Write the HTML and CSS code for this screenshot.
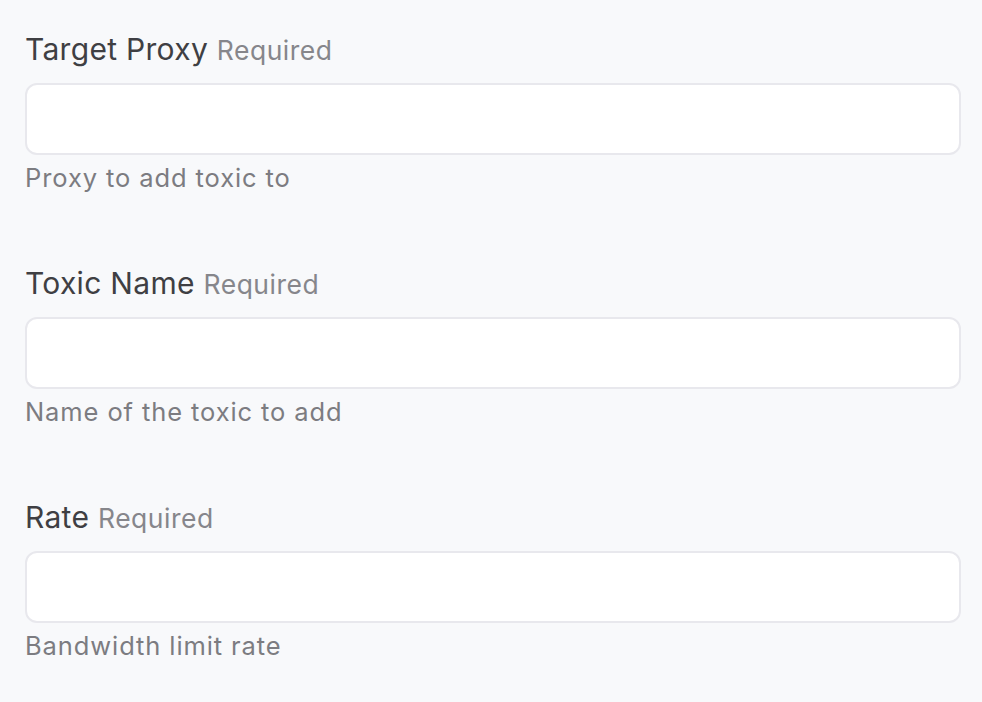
FILE: index.html
```html
<!DOCTYPE html>
<html>
<head>
<meta charset="utf-8">
<link rel="stylesheet" href="styles.css">
</head>
<body>
<form class="form">
  <div class="field">
    <label class="label">Target Proxy <span class="req">Required</span></label>
    <input class="input" type="text">
    <div class="help">Proxy to add toxic to</div>
  </div>
  <div class="field">
    <label class="label">Toxic Name <span class="req">Required</span></label>
    <input class="input" type="text">
    <div class="help">Name of the toxic to add</div>
  </div>
  <div class="field">
    <label class="label">Rate <span class="req">Required</span></label>
    <input class="input" type="text">
    <div class="help">Bandwidth limit rate</div>
  </div>
</form>
</body>
</html>
```
FILE: styles.css
```css
html, body {
  margin: 0;
  padding: 0;
  background: #f8f9fb;
}
body {
  font-family: Inter, "Noto Sans", sans-serif;
}
.form {
  display: flex;
  flex-direction: column;
  gap: 71px;
  padding: 31px 21px 0 25px;
}
.field {
  display: flex;
  flex-direction: column;
}
.label {
  font-size: 30px;
  line-height: 36px;
  letter-spacing: 0.3px;
  color: #3f3f43;
  margin-bottom: 15px;
}
.req {
  font-size: 26.5px;
  letter-spacing: 0.5px;
  color: #86868b;
}
.input {
  box-sizing: border-box;
  height: 72px;
  width: 100%;
  border: 2px solid #e8e8ed;
  border-radius: 12px;
  background: #fff;
  margin: 0;
}
.help {
  font-size: 25.5px;
  line-height: 32px;
  letter-spacing: 0.9px;
  color: #7c7c81;
  margin-top: 7px;
}
```
